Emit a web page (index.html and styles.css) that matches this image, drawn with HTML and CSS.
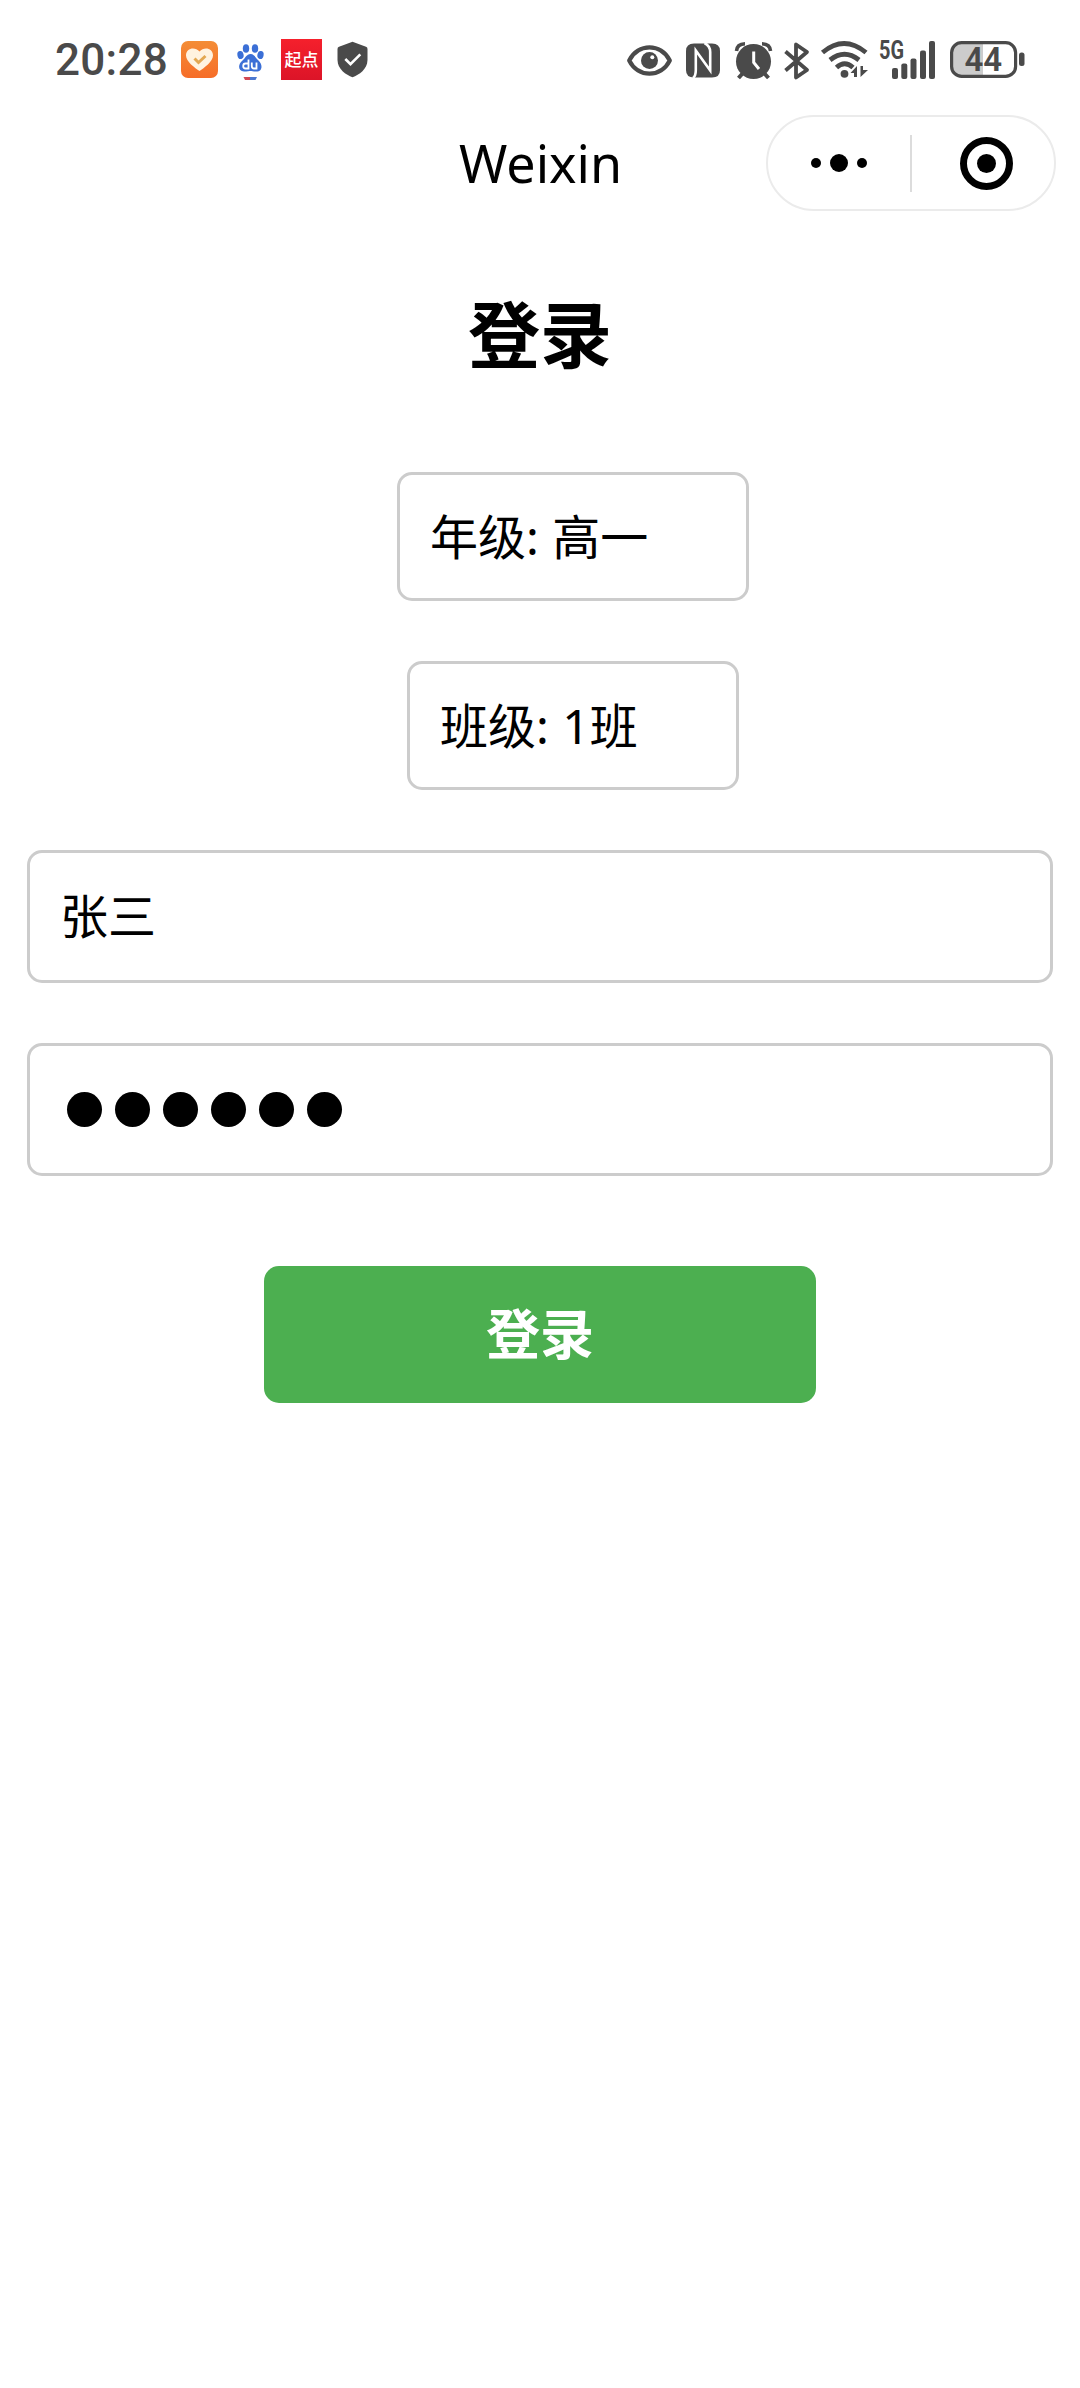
FILE: index.html
```html
<!DOCTYPE html>
<html lang="zh-CN">
<head>
<meta charset="utf-8">
<title>登录</title>
<link rel="stylesheet" href="styles.css">
</head>
<body>
<header class="status">
  <div class="status-left">
    <span class="time">20:28</span>
    <svg class="health" width="37" height="37" viewBox="0 0 37 37">
      <defs><linearGradient id="og" x1="0" y1="0" x2="0" y2="1"><stop offset="0" stop-color="#f48d36"/><stop offset="1" stop-color="#f66d28"/></linearGradient></defs>
      <rect width="37" height="37" rx="7" fill="url(#og)"/>
      <path d="M18.5 30C14 27 5 20.500 5 14.500C5 7 14 5.500 18.500 10.500C23 5.500 32 7 32 14.500C32 20.500 23 27 18.500 30Z" fill="#fff3e0"/>
      <path d="M13.500 17.500L17.500 21.500L24.500 15" fill="none" stroke="#e3a852" stroke-width="3"/>
    </svg>
    <svg class="baidu" width="27" height="39" viewBox="0 0 27 39">
      <g fill="#3b6fd6">
        <ellipse cx="9" cy="6.500" rx="3.200" ry="4.300"/>
        <ellipse cx="18" cy="6.500" rx="3.200" ry="4.300"/>
        <ellipse cx="3.500" cy="13" rx="3.100" ry="4" transform="rotate(-12 3.500 13)"/>
        <ellipse cx="23.500" cy="13" rx="3.100" ry="4" transform="rotate(12 23.500 13)"/>
        <path d="M13.500 12C17.500 12 18.500 16 21.500 18.500C26 22.500 25.500 29.500 19.500 29.500C16 29.500 15 29 13.500 29C12 29 10.500 29.500 7 29.500C1 29.500 .5 22.500 5.500 18.500C8.500 16 9.500 12 13.500 12Z"/>
      </g>
      <path d="M11.500 17.500V26.500H8.500Q6.200 26.500 6.200 24Q6.200 21.500 8.500 21.500H11.500M14.800 20.500V24Q14.800 26.500 17 26.500H19.500V20.500" fill="none" stroke="#fff" stroke-width="1.800"/>
      <path d="M6.500 35h6.500v3H8z" fill="#d14852"/><path d="M13 35h7l-1.500 3H13z" fill="#4c78d0"/>
    </svg>
    <span class="qidian">起点</span>
    <svg class="shield" width="31" height="37" viewBox="0 0 31 37">
      <path d="M15.500 .8L29 5.700Q30.500 6.300 30.500 8V19C30.500 28 22 34 15.500 36.200C9 34 .5 28 .5 19V8Q.5 6.300 2 5.700Z" fill="#4a4a4a"/>
      <path d="M8.300 18L13.500 23.200L23.300 13.300" fill="none" stroke="#fff" stroke-width="2.600"/>
    </svg>
  </div>
  <div class="status-right">
    <svg width="45" height="31" viewBox="0 0 45 31">
      <path d="M2.200 15.500C11 -2 34 -2 42.800 15.500C34 33 11 33 2.200 15.500Z" fill="none" stroke="#4a4a4a" stroke-width="4.200" stroke-linejoin="round"/>
      <circle cx="22.500" cy="15.500" r="8.500" fill="#4a4a4a"/><circle cx="25.300" cy="12.300" r="2" fill="#fff"/>
    </svg>
    <svg class="nfc" width="34" height="35" viewBox="0 0 34 35">
      <path d="M8 .5H26Q34 .5 34 8V27Q34 34.500 26 34.500H8Q0 34.500 0 27V8Q0 .5 8 .5Z" fill="#4a4a4a"/>
      <path d="M7 35Q9.800 33 9.800 27V7.500L24.200 27.500V9Q24.200 3 18.500 0" fill="none" stroke="#fff" stroke-width="2.600"/>
    </svg>
    <svg class="alarm" width="37" height="38" viewBox="0 0 37 38">
      <g fill="none" stroke="#4a4a4a"><path d="M1.500 9Q2 2 10 1.800M35.500 9Q35 2 27 1.800" stroke-width="3.600"/><path d="M8 31L3.500 36M29 31L33.500 36" stroke-width="4"/></g>
      <circle cx="18.500" cy="19.500" r="17.500" fill="#4a4a4a"/>
      <path d="M18.700 9.500V20.500L24 27" fill="none" stroke="#fff" stroke-width="3"/>
    </svg>
    <svg class="bluetooth" width="26" height="38" viewBox="0 0 26 38">
      <path d="M1.500 9.500L23 28L12 35.500V2.500L23 10L1.500 28.500" fill="none" stroke="#4a4a4a" stroke-width="3.800" stroke-linejoin="round"/>
    </svg>
    <svg class="wifi" width="48" height="37" viewBox="0 0 48 37">
      <g fill="none" stroke="#4a4a4a" stroke-width="4.800"><path d="M1.500 11.500Q23 -6.500 45 11.500"/><path d="M9 19Q23.500 7.500 38 19"/><path d="M15.500 26.500Q23.500 19 32 26.500"/></g>
      <circle cx="23.500" cy="32.800" r="3.900" fill="#4a4a4a"/>
      <path d="M36 25V36H33V32H29.500ZM39.500 36V25H42V29H47Z" fill="#4a4a4a"/>
    </svg>
    <svg class="signal" width="57" height="38" viewBox="0 0 57 38">
      <text class="network" x="0" y="18" textLength="25" lengthAdjust="spacingAndGlyphs">5G</text>
      <g fill="#4a4a4a"><rect x="13" y="27" width="6" height="11" rx="2"/><rect x="22.300" y="22.500" width="6" height="15.500" rx="2"/><rect x="31.500" y="17.500" width="6" height="20.500" rx="2"/><rect x="41" y="9.500" width="6" height="28.500" rx="2"/><rect x="50" y="0" width="6" height="38" rx="2"/></g>
    </svg>
    <svg class="battery" width="76" height="37" viewBox="0 0 76 37">
      <path d="M12 1.500H33V35H12Q2 35 2 25V11Q2 1.500 12 1.500Z" fill="#ccc"/>
      <rect x="1.600" y="1.600" width="64" height="33.800" rx="10" fill="none" stroke="#4a4a4a" stroke-width="3.200"/>
      <rect x="69" y="11.500" width="5.500" height="13.500" rx="2.500" fill="#4a4a4a"/>
      <text class="charge" x="14.500" y="30">44</text>
    </svg>
  </div>
</header>
<nav class="nav">
  <span class="app-name">Weixin</span>
  <div class="capsule">
    <div class="half"><i class="dot"></i><i class="dot dot-big"></i><i class="dot"></i></div>
    <div class="half half-close"><i class="ring"><i class="core"></i></i></div>
  </div>
</nav>
<main class="login">
  <h1 class="title">登录</h1>
  <div class="picker picker-grade">年级: 高一</div>
  <div class="picker picker-class">班级: 1班</div>
  <div class="field">张三</div>
  <div class="field field-password"><i class="bullet"></i><i class="bullet"></i><i class="bullet"></i><i class="bullet"></i><i class="bullet"></i><i class="bullet"></i></div>
  <button class="submit">登录</button>
</main>
</body>
</html>
```
FILE: styles.css
```css
* { box-sizing: border-box; }
body {
  margin: 0;
  min-height: 2388px;
  background: #fff;
  color: #000;
  font-family: "Noto Sans", "Noto Sans CJK SC", sans-serif;
}
svg { display: block; flex: none; overflow: visible; }

.status {
  height: 115px;
  padding: 39px 54px 0 55px;
  display: flex;
  justify-content: space-between;
}
.status-left, .status-right {
  display: flex;
  align-items: center;
  height: 41px;
}
.time {
  width: 126px;
  padding-top: 2px;
  font: 500 44px/41px Roboto, sans-serif;
  letter-spacing: 0.3px;
  color: #4a4a4a;
}
.baidu { margin: 4px 0 0 19px; }
.qidian {
  width: 41px;
  height: 41px;
  margin-left: 17px;
  background: linear-gradient(#f5202c, #dc1428);
  color: #fff;
  font: 500 17px/39px "Noto Sans CJK SC", sans-serif;
  text-align: center;
}
.shield { margin-left: 15px; }
.status-right svg { margin-top: 2px; }
.status-right .nfc { margin: 1px 0 0 14px; }
.status-right .alarm { margin-left: 15px; }
.status-right .bluetooth { margin-left: 12px; }
.status-right .wifi { margin: 0 0 0 11px; }
.status-right .signal { margin: 1px 0 0 10px; }
.status-right .battery { margin: 0 0 0 14px; }
.network { font: 700 25px/1 Roboto, sans-serif; fill: #4a4a4a; }
.charge { font: 600 33px/1 Roboto, sans-serif; fill: #4a4a4a; }

.nav {
  height: 96px;
  padding-right: 24px;
  display: grid;
  grid-template-columns: 766px 290px;
  align-items: center;
}
.app-name {
  padding-left: 459px;
  font-size: 52px;
  line-height: 96px;
}
.capsule {
  height: 96px;
  border: 2px solid #ebebeb;
  border-radius: 48px;
  display: grid;
  grid-template-columns: 144px 1fr;
  align-items: center;
}
.half {
  height: 57px;
  border-right: 2px solid #dcdcdc;
  display: flex;
  align-items: center;
  justify-content: center;
  gap: 9px;
}
.half-close { border: 0; padding-left: 6px; }
.dot { width: 10px; height: 10px; border-radius: 50%; background: #000; }
.dot-big { width: 18px; height: 18px; }
.ring {
  width: 53px;
  height: 53px;
  border: 7px solid #000;
  border-radius: 50%;
  display: flex;
  align-items: center;
  justify-content: center;
}
.core { width: 19px; height: 19px; border-radius: 50%; background: #000; }

.login {
  padding: 70px 27px 0;
  display: flex;
  flex-direction: column;
  align-items: center;
}
.title {
  margin: 0 0 91px;
  height: 100px;
  font: 700 72px/100px "Noto Sans CJK SC", sans-serif;
}
.picker, .field {
  border: 3px solid #ccc;
  border-radius: 15px;
  padding-left: 30px;
  font-size: 48px;
  word-spacing: 1px;
  white-space: nowrap;
}
.picker {
  height: 129px;
  margin: 0 0 60px 66px;
  line-height: 123px;
}
.picker-grade { width: 352px; }
.picker-class { width: 332px; }
.field {
  align-self: stretch;
  height: 133px;
  margin-bottom: 60px;
  line-height: 126px;
}
.field-password {
  display: flex;
  align-items: center;
  gap: 13px;
  padding-left: 37px;
  margin-bottom: 90px;
}
.bullet { width: 35px; height: 35px; border-radius: 50%; background: #000; }
.submit {
  width: 552px;
  height: 137px;
  padding: 0 0 5px;
  border: 0;
  border-radius: 15px;
  background: #4caf50;
  color: #fff;
  font: 700 54px/132px "Noto Sans CJK SC", sans-serif;
}
```
